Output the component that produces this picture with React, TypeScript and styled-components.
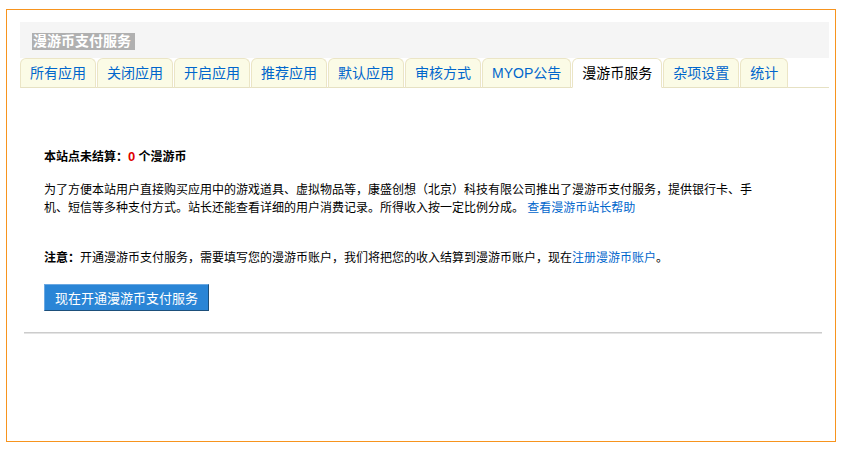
import React from "react";
import styled, { createGlobalStyle } from "styled-components";

const tabs = [
  "所有应用",
  "关闭应用",
  "开启应用",
  "推荐应用",
  "默认应用",
  "审核方式",
  "MYOP公告",
  "漫游币服务",
  "杂项设置",
  "统计",
];

const ACTIVE = "漫游币服务";

const App = () => {
  return (
    <>
      <GlobalStyle />
      <Frame>
        <Header>
          <Title>漫游币支付服务</Title>
        </Header>
        <TabBar>
          {tabs.map((t) => (
            <Tab key={t} $active={t === ACTIVE}>
              {t}
            </Tab>
          ))}
        </TabBar>
        <Body>
          <Summary>
            本站点未结算：<Zero>0</Zero> 个漫游币
          </Summary>
          <Paragraph>
            为了方便本站用户直接购买应用中的游戏道具、虚拟物品等，康盛创想（北京）科技有限公司推出了漫游币支付服务，提供银行卡、手机、短信等多种支付方式。站长还能查看详细的用户消费记录。所得收入按一定比例分成。{" "}
            <Link href="#">查看漫游币站长帮助</Link>
          </Paragraph>
          <Note>
            <strong>注意：</strong>开通漫游币支付服务，需要填写您的漫游币账户，我们将把您的收入结算到漫游币账户，现在
            <Link href="#">注册漫游币账户</Link>。
          </Note>
          <OpenButton>现在开通漫游币支付服务</OpenButton>
          <Divider />
        </Body>
      </Frame>
    </>
  );
};

export default App;

const GlobalStyle = createGlobalStyle`
  body {
    margin: 0;
    background: #fff;
    font-family: "Liberation Sans", "Noto Sans CJK SC", sans-serif;
    font-size: 12px;
    color: #000;
  }
`;

const Frame = styled.div`
  box-sizing: border-box;
  width: 830px;
  height: 433px;
  margin: 9px 0 0 6px;
  border: 1px solid #f7941e;
  padding: 12px 6px 0 13px;
`;

const Header = styled.div`
  height: 36px;
  background: #f5f5f5;
  padding: 11px 0 0 12px;
  box-sizing: border-box;
`;

const Title = styled.span`
  display: inline-block;
  background: #b0b0b0;
  color: #fff;
  font-size: 14px;
  font-weight: bold;
  line-height: 17px;
  padding: 0 4px 0 1px;
`;

const TabBar = styled.div`
  display: flex;
  align-items: flex-end;
  border-bottom: 1px solid #e6e1c3;
`;

const Tab = styled.div<{ $active?: boolean }>`
  height: 28px;
  line-height: 28px;
  padding: 0 9px;
  margin-right: 1px;
  margin-bottom: -1px;
  border: 1px solid #ebe5c6;
  border-bottom: 1px solid ${(p) => (p.$active ? "#fff" : "#e6e1c3")};
  border-radius: 6px 6px 0 0;
  background: ${(p) => (p.$active ? "#fff" : "#fbfbe6")};
  color: ${(p) => (p.$active ? "#000" : "#0066cc")};
  font-size: 14px;
  white-space: nowrap;
  cursor: pointer;
`;

const Body = styled.div`
  width: 798px;
  margin-left: 4px;
  padding-top: 60px;
`;

const Summary = styled.div`
  padding: 0 20px;
  font-weight: bold;
  line-height: 18px;
`;

const Zero = styled.span`
  color: #e00000;
  font-size: 13px;
`;

const Paragraph = styled.p`
  margin: 15px 0 0;
  padding: 0 20px;
  width: 718px;
  line-height: 18px;
`;

const Note = styled.p`
  margin: 32px 0 0;
  padding: 0 20px;
  line-height: 18px;
`;

const Link = styled.a`
  color: #0066cc;
  text-decoration: none;
`;

const OpenButton = styled.button`
  display: block;
  margin: 17px 0 0 20px;
  width: 165px;
  height: 27px;
  padding: 0;
  background: #2a85d6;
  color: #fff;
  font-family: "Liberation Sans", "Noto Sans CJK SC", sans-serif;
  font-size: 13px;
  border: 1px solid;
  border-color: #6aa8e2 #1d4f7a #1d4f7a #6aa8e2;
  cursor: pointer;
`;

const Divider = styled.div`
  margin-top: 21px;
  border-top: 1px solid #cccccc;
  border-bottom: 1px solid #e4e4e4;
`;
